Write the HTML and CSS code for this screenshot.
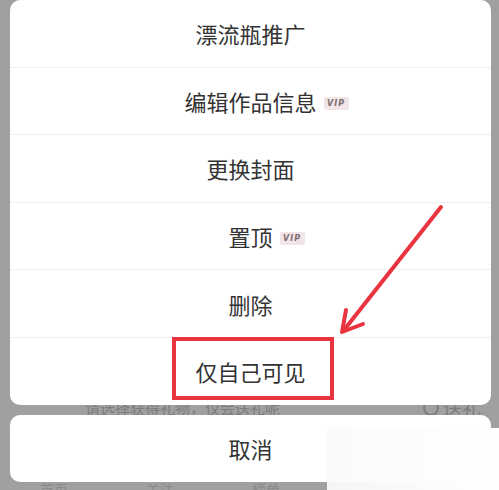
FILE: index.html
```html
<!DOCTYPE html>
<html lang="zh-CN">
<head>
    <meta charset="UTF-8">
    <meta name="viewport" content="width=device-width, initial-scale=1.0">
    <title>作品操作</title>
    <link rel="stylesheet" href="styles.css">
</head>
<body>
    <div class="screen">
        <!-- page behind the dimmed overlay -->
        <div class="backdrop">
            <div class="gift-row">
                <span class="gift-tip">请选择获得礼物，仅会送礼呢</span>
                <span class="gift-send"><i class="gift-radio"></i>送礼</span>
            </div>
            <div class="tab-row">
                <span>首页</span>
                <span>关注</span>
                <span>榜单</span>
            </div>
        </div>

        <div class="sheet">
            <div class="menu">
                <div class="menu-item"><span class="label">漂流瓶推广</span></div>
                <div class="menu-item"><span class="label">编辑作品信息<em class="vip">VIP</em></span></div>
                <div class="menu-item"><span class="label">更换封面</span></div>
                <div class="menu-item"><span class="label">置顶<em class="vip">VIP</em></span></div>
                <div class="menu-item"><span class="label">删除</span></div>
                <div class="menu-item"><span class="label">仅自己可见</span></div>
            </div>
            <div class="menu cancel">
                <div class="menu-item"><span class="label">取消</span></div>
            </div>
        </div>

        <!-- annotation -->
        <div class="highlight"></div>
        <svg class="arrow" width="499" height="490" viewBox="0 0 499 490">
            <line x1="441" y1="207" x2="344" y2="330" stroke="#e9343f" stroke-width="4" stroke-linecap="round"/>
            <polyline points="346,310 342,332 363,324" fill="none" stroke="#e9343f" stroke-width="4" stroke-linecap="round" stroke-linejoin="round"/>
        </svg>
        <div class="watermark"></div>
    </div>
</body>
</html>
```

FILE: styles.css
```css
body {
    margin: 0;
    padding: 0;
    font-family: "Noto Sans CJK SC", "Noto Sans", sans-serif;
    background: #a0a0a0;
    overflow: hidden;
}
.screen {
    position: relative;
    width: 499px;
    height: 490px;
    overflow: hidden;
    background: #a0a0a0;
}
.backdrop {
    position: absolute;
    left: 0;
    top: 0;
    width: 100%;
    height: 100%;
    color: #7c7c7c;
}
.gift-row {
    position: absolute;
    left: 85px;
    right: 18px;
    top: 398px;
    display: flex;
    justify-content: space-between;
    align-items: center;
    font-size: 15px;
    line-height: 20px;
}
.gift-send {
    display: flex;
    align-items: center;
    gap: 4px;
    font-size: 19px;
}
.gift-radio {
    width: 12px;
    height: 12px;
    border: 2px solid #7c7c7c;
    border-radius: 50%;
}
.tab-row {
    position: absolute;
    left: 40px;
    top: 480px;
    display: flex;
    gap: 78px;
    font-size: 14px;
    line-height: 18px;
    color: #8a8a8a;
}
.sheet {
    position: relative;
    padding: 0 8px 0 10px;
    display: flex;
    flex-direction: column;
    gap: 10px;
}
.menu {
    background: #fff;
    border-radius: 10px;
    overflow: hidden;
}
.menu-item {
    height: 66.6px;
    display: flex;
    align-items: center;
    justify-content: center;
    border-bottom: 1px solid #efefef;
}
.menu-item:last-child {
    border-bottom: none;
}
.cancel .menu-item {
    height: 67px;
}
.label {
    position: relative;
    font-size: 22px;
    color: #333;
    line-height: 1;
}
.vip {
    position: absolute;
    left: 100%;
    top: 7px;
    margin-left: 7px;
    width: 25px;
    height: 13px;
    background: #f1e5e7;
    border-radius: 2px;
    font-size: 8px;
    line-height: 13px;
    font-family: "DejaVu Sans", sans-serif;
    font-style: italic;
    font-weight: bold;
    letter-spacing: 1px;
    text-align: center;
    color: #7d6b70;
}
.highlight {
    position: absolute;
    left: 172px;
    top: 337px;
    width: 154px;
    height: 55px;
    border: 4px solid #e9343f;
}
.arrow {
    position: absolute;
    left: 0;
    top: 0;
}
.watermark {
    position: absolute;
    left: 327px;
    top: 428px;
    width: 172px;
    height: 62px;
    background: linear-gradient(90deg, rgba(250, 250, 250, 0.95), #fff);
}
```
